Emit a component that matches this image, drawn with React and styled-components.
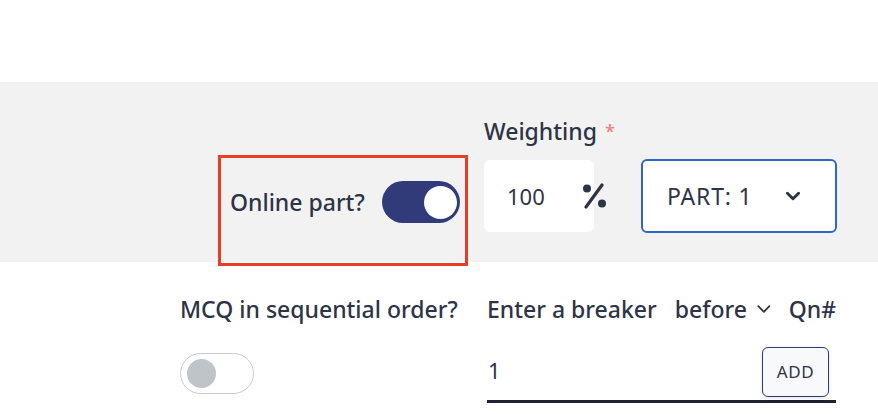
import React from "react";
import styled, { createGlobalStyle } from "styled-components";

const Global = createGlobalStyle`
  html, body { margin: 0; padding: 0; background: #ffffff; }
  body { font-family: "Noto Sans", "Open Sans", sans-serif; color: #2d3446; }
  * { box-sizing: border-box; }
`;

const Page = styled.div`
  width: 878px;
  height: 414px;
  overflow: hidden;
  padding-top: 82px;
`;

const Band = styled.section`
  height: 180px;
  background: #f2f2f2;
  display: flex;
  justify-content: flex-end;
  align-items: flex-end;
  padding-right: 41px;
`;

const Highlight = styled.div`
  width: 250px;
  height: 111px;
  margin-bottom: -4px;
  margin-right: 16px;
  border: 3px solid #e63e27;
  display: flex;
  align-items: flex-start;
  justify-content: space-between;
  padding: 23px 5px 0 9px;
  position: relative;
  z-index: 1;
`;

const Label = styled.span`
  font-size: 23px;
  font-weight: 500;
  color: #2d3446;
  line-height: 42px;
  white-space: nowrap;
`;

const Switch = styled.div`
  width: ${(p) => (p.$on ? 78 : 74)}px;
  height: ${(p) => (p.$on ? 42 : 41)}px;
  border-radius: 21px;
  background: ${(p) => (p.$on ? "#323b7a" : "#ffffff")};
  border: ${(p) => (p.$on ? "none" : "1px solid #c6cacf")};
  display: flex;
  align-items: center;
  justify-content: ${(p) => (p.$on ? "flex-end" : "flex-start")};
  padding: 0 ${(p) => (p.$on ? 3 : 6)}px;
  flex: none;
`;

const Knob = styled.div`
  width: ${(p) => (p.$on ? 33 : 29)}px;
  height: ${(p) => (p.$on ? 33 : 29)}px;
  border-radius: 50%;
  background: ${(p) => (p.$on ? "#ffffff" : "#bfc4c8")};
`;

const WeightCol = styled.div`
  display: flex;
  flex-direction: column;
  width: 122px;
  margin-right: 35px;
  margin-bottom: 30px;
`;

const FieldLabel = styled.div`
  font-size: 23px;
  font-weight: 500;
  color: #2d3446;
  line-height: 28px;
  margin-bottom: 15px;
  white-space: nowrap;
`;

const Req = styled.span`
  color: #f07b7b;
  font-size: 18px;
  margin-left: 8px;
  vertical-align: 2px;
`;

const InputWrap = styled.div`
  position: relative;
  width: 110px;
  height: 72px;
`;

const WhiteBox = styled.div`
  width: 110px;
  height: 72px;
  background: #ffffff;
  border-radius: 6px;
  font-size: 22px;
  font-weight: 400;
  display: flex;
  align-items: center;
  padding-left: 23px;
  color: #2d3446;
`;

const Percent = styled.svg`
  position: absolute;
  left: 98px;
  top: 23px;
`;

const Select = styled.div`
  width: 196px;
  height: 74px;
  border: 2px solid #2f64c8;
  border-radius: 6px;
  background: #ffffff;
  margin-bottom: 29px;
  display: flex;
  align-items: center;
  padding: 0 33px 0 24px;
  justify-content: space-between;
  font-size: 23px;
  letter-spacing: 0.8px;
  color: #2d3446;
`;

const Lower = styled.section`
  display: grid;
  grid-template-columns: 307px 349px;
  justify-content: end;
  padding-right: 42px;
  padding-top: 26px;
`;

const Col = styled.div`
  display: flex;
  flex-direction: column;
`;

const HeaderRow = styled.div`
  display: flex;
  align-items: center;
  height: 42px;
`;

const BreakerText = styled.span`
  font-size: 23px;
  font-weight: 500;
  color: #2d3446;
  white-space: nowrap;
  margin-right: ${(p) => p.$mr || 0}px;
  margin-left: ${(p) => p.$ml || 0}px;
`;

const SwitchRow = styled.div`
  padding-top: 23px;
`;

const EntryRow = styled.div`
  display: flex;
  align-items: center;
  justify-content: space-between;
  height: 56px;
  border-bottom: 3px solid #1e2130;
  margin-top: 17px;
  padding-right: 7px;
`;

const EntryValue = styled.span`
  font-size: 22px;
  color: #2d3446;
  padding-left: 1px;
  padding-bottom: 8px;
`;

const AddButton = styled.button`
  width: 67px;
  height: 50px;
  border: 1px solid #2d3a7c;
  border-radius: 6px;
  background: #f8f9fb;
  box-shadow: 0 1px 4px rgba(0, 0, 0, 0.12);
  font-family: "Noto Sans", sans-serif;
  font-size: 17px;
  letter-spacing: 0.6px;
  color: #2d3446;
  padding: 0;
  margin-top: 2px;
  margin-bottom: 6px;
`;

const Chevron = ({ size = 16, stroke = 2.4 }) => (
  <svg width={size} height={size} viewBox="0 0 16 16" fill="none">
    <path d="M3 5.5 L8 10.5 L13 5.5" stroke="#2d3446" strokeWidth={stroke} strokeLinecap="round" strokeLinejoin="round" />
  </svg>
);

export default function App() {
  return (
    <Page>
      <Global />
      <Band>
        <Highlight>
          <Label>Online part?</Label>
          <Switch $on>
            <Knob $on />
          </Switch>
        </Highlight>
        <WeightCol>
          <FieldLabel>
            Weighting<Req>*</Req>
          </FieldLabel>
          <InputWrap>
            <WhiteBox>100</WhiteBox>
            <Percent width="25" height="26" viewBox="0 0 25 26">
              <circle cx="5" cy="5.5" r="4" fill="#2d3446" />
              <circle cx="20" cy="20.5" r="4" fill="#2d3446" />
              <path d="M20 2 L4 24" stroke="#2d3446" strokeWidth="3.2" strokeLinecap="round" />
            </Percent>
          </InputWrap>
        </WeightCol>
        <Select>
          <span>PART: 1</span>
          <Chevron size={18} stroke={2.6} />
        </Select>
      </Band>
      <Lower>
        <Col>
          <HeaderRow>
            <BreakerText>MCQ in sequential order?</BreakerText>
          </HeaderRow>
          <SwitchRow>
            <Switch>
              <Knob />
            </Switch>
          </SwitchRow>
        </Col>
        <Col>
          <HeaderRow>
            <BreakerText $mr={18}>Enter a breaker</BreakerText>
            <BreakerText $mr={8}>before</BreakerText>
            <Chevron size={18} stroke={1.6} />
            <BreakerText $ml={16}>Qn#</BreakerText>
          </HeaderRow>
          <EntryRow>
            <EntryValue>1</EntryValue>
            <AddButton>ADD</AddButton>
          </EntryRow>
        </Col>
      </Lower>
    </Page>
  );
}
